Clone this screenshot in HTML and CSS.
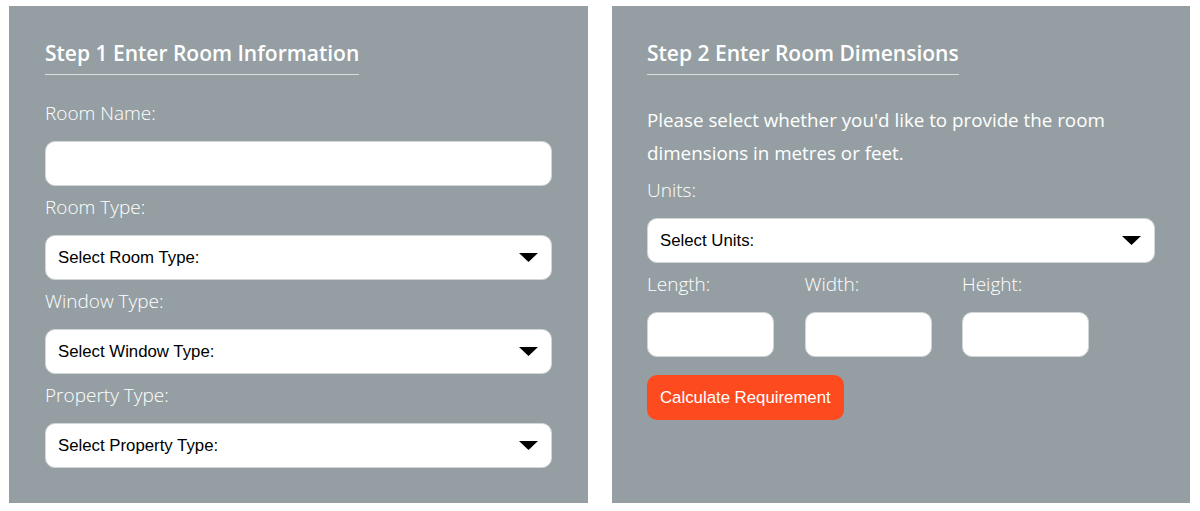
FILE: index.html
```html
<!DOCTYPE html>
<html lang="en">
<head>
<meta charset="utf-8">
<title>Room Calculator</title>
<link rel="stylesheet" href="styles.css">
</head>
<body>
<div class="steps">
  <section class="panel">
    <h2 class="panel-title">Step 1 Enter Room Information</h2>
    <div class="field first">
      <label class="field-label" for="room-name">Room Name:</label>
      <input class="text-input" id="room-name" type="text">
    </div>
    <div class="field">
      <label class="field-label" for="room-type">Room Type:</label>
      <div class="select-wrap">
        <select class="select-input" id="room-type"><option>Select Room Type:</option></select>
        <svg class="select-arrow" viewBox="0 0 19 9" width="19" height="9"><path d="M0 0H19L9.5 9Z" fill="#000"/></svg>
      </div>
    </div>
    <div class="field">
      <label class="field-label" for="window-type">Window Type:</label>
      <div class="select-wrap">
        <select class="select-input" id="window-type"><option>Select Window Type:</option></select>
        <svg class="select-arrow" viewBox="0 0 19 9" width="19" height="9"><path d="M0 0H19L9.5 9Z" fill="#000"/></svg>
      </div>
    </div>
    <div class="field">
      <label class="field-label" for="property-type">Property Type:</label>
      <div class="select-wrap">
        <select class="select-input" id="property-type"><option>Select Property Type:</option></select>
        <svg class="select-arrow" viewBox="0 0 19 9" width="19" height="9"><path d="M0 0H19L9.5 9Z" fill="#000"/></svg>
      </div>
    </div>
  </section>
  <section class="panel">
    <h2 class="panel-title">Step 2 Enter Room Dimensions</h2>
    <p class="intro">Please select whether you'd like to provide the room dimensions in metres or feet.</p>
    <div class="field units">
      <label class="field-label" for="units">Units:</label>
      <div class="select-wrap">
        <select class="select-input" id="units"><option>Select Units:</option></select>
        <svg class="select-arrow" viewBox="0 0 19 9" width="19" height="9"><path d="M0 0H19L9.5 9Z" fill="#000"/></svg>
      </div>
    </div>
    <div class="dims">
      <div class="field">
        <label class="field-label" for="length">Length:</label>
        <input class="text-input" id="length" type="text">
      </div>
      <div class="field">
        <label class="field-label" for="width">Width:</label>
        <input class="text-input" id="width" type="text">
      </div>
      <div class="field">
        <label class="field-label" for="height">Height:</label>
        <input class="text-input" id="height" type="text">
      </div>
    </div>
    <button class="calc-btn" type="button">Calculate Requirement</button>
  </section>
</div>
</body>
</html>
```
FILE: styles.css
```css
* { box-sizing: border-box; }
html, body { margin: 0; padding: 0; background: #fff; }
body { font-family: "Open Sans", "Liberation Sans", sans-serif; }

.steps {
  display: grid;
  grid-template-columns: 579px 578px;
  column-gap: 24px;
  padding: 6px 0 0 9px;
}
.panel {
  background: #959fa3;
  padding: 31px 36px 36px 36px;
  color: #fff;
  height: 497px;
}
.panel + .panel { padding-left: 35px; padding-right: 35px; }

.panel-title {
  display: inline-block;
  margin: 0;
  font-size: 21px;
  line-height: 32px;
  font-weight: 600;
  color: #fff;
  padding-bottom: 5px;
  border-bottom: 1px solid #d9dee0;
}

.field { margin-top: 8.5px; }
.field.first { margin-top: 25px; }
.field-label {
  display: block;
  font-size: 19px;
  line-height: 27px;
  font-weight: 300;
  color: #fff;
  margin-bottom: 13.5px;
}

.text-input,
.select-input {
  display: block;
  width: 100%;
  height: 45px;
  margin: 0;
  background: #fff;
  border: 1px solid #d3d6d7;
  border-radius: 10px;
  outline: none;
}
.select-wrap { position: relative; }
.select-input {
  appearance: none;
  -webkit-appearance: none;
  padding: 1px 40px 0 12px;
  font-family: "Liberation Sans", Arial, sans-serif;
  font-size: 16.8px;
  color: #000;
}
.select-arrow {
  position: absolute;
  right: 14px;
  top: 18px;
  pointer-events: none;
}

.intro {
  margin: 29px 0 0 0;
  font-size: 18.8px;
  line-height: 33px;
  font-weight: 400;
  color: #fff;
}
.field.units { margin-top: 7px; }

.dims {
  display: grid;
  grid-template-columns: repeat(3, 127px);
  column-gap: 30.5px;
}

.calc-btn {
  display: block;
  margin-top: 18px;
  height: 45px;
  padding: 1px 13px 0;
  border: none;
  border-radius: 10px;
  background: #fd4a1f;
  color: #fff;
  font-family: "Liberation Sans", Arial, sans-serif;
  font-size: 16.8px;
  cursor: pointer;
}
```
